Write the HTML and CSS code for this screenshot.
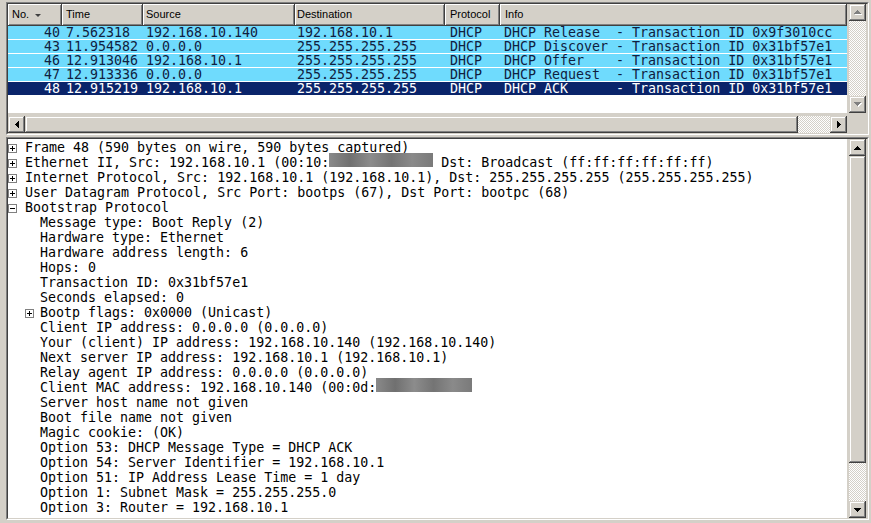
FILE: index.html
```html
<!doctype html>
<html>
<head>
<meta charset="utf-8">
<title>Ethereal - DHCP capture</title>
<link rel="stylesheet" href="styles.css">
</head>
<body>

<div class="win">

    <!-- packet list -->
    <div class="frame top"><div class="frame-in">

        <div class="plist">
            <div class="phead">
                <div class="hc c-no">No. <span class="sort"></span></div>
                <div class="hc c-time">Time</div>
                <div class="hc c-src">Source</div>
                <div class="hc c-dst">Destination</div>
                <div class="hc c-proto">Protocol</div>
                <div class="hc c-info">Info</div>
            </div>
            <div class="prow"><span class="c-no">40</span><span class="c-time">7.562318</span><span class="c-src">192.168.10.140</span><span class="c-dst">192.168.10.1</span><span class="c-proto">DHCP</span><span class="c-info">DHCP Release  - Transaction ID 0x9f3010cc</span></div>
            <div class="prow"><span class="c-no">43</span><span class="c-time">11.954582</span><span class="c-src">0.0.0.0</span><span class="c-dst">255.255.255.255</span><span class="c-proto">DHCP</span><span class="c-info">DHCP Discover - Transaction ID 0x31bf57e1</span></div>
            <div class="prow"><span class="c-no">46</span><span class="c-time">12.913046</span><span class="c-src">192.168.10.1</span><span class="c-dst">255.255.255.255</span><span class="c-proto">DHCP</span><span class="c-info">DHCP Offer    - Transaction ID 0x31bf57e1</span></div>
            <div class="prow"><span class="c-no">47</span><span class="c-time">12.913336</span><span class="c-src">0.0.0.0</span><span class="c-dst">255.255.255.255</span><span class="c-proto">DHCP</span><span class="c-info">DHCP Request  - Transaction ID 0x31bf57e1</span></div>
            <div class="prow sel"><span class="c-no">48</span><span class="c-time">12.915219</span><span class="c-src">192.168.10.1</span><span class="c-dst">255.255.255.255</span><span class="c-proto">DHCP</span><span class="c-info">DHCP ACK      - Transaction ID 0x31bf57e1</span></div>
        </div>

        <div class="vscroll">
            <div class="btn off"><svg width="8" height="5"><path d="M4 1h1v1h-1zM3 2h3v1h-3zM2 3h5v1h-5zM1 4h7v1h-7z" fill="#fff"/><path d="M3 0h1v1h-1zM2 1h3v1h-3zM1 2h5v1h-5zM0 3h7v1h-7z" fill="#808080"/></svg></div>
            <div class="track"></div>
            <div class="btn off"><svg width="8" height="5"><path d="M1 1h7v1h-7zM2 2h5v1h-5zM3 3h3v1h-3zM4 4h1v1h-1z" fill="#fff"/><path d="M0 0h7v1h-7zM1 1h5v1h-5zM2 2h3v1h-3zM3 3h1v1h-1z" fill="#808080"/></svg></div>
        </div>

        <div class="hscroll">
            <div class="btn"><svg width="4" height="7"><path d="M3 0h1v7h-1zM2 1h1v5h-1zM1 2h1v3h-1zM0 3h1v1h-1z" fill="#000"/></svg></div>
            <div class="thumb hthumb"></div>
            <div class="track"></div>
            <div class="btn"><svg width="4" height="7"><path d="M0 0h1v7h-1zM1 1h1v5h-1zM2 2h1v3h-1zM3 3h1v1h-1z" fill="#000"/></svg></div>
        </div>

    </div></div>

    <!-- packet details -->
    <div class="frame bottom"><div class="frame-in">

        <div class="tree">
            <div class="tn"><span class="tw"><svg class="box" width="9" height="9"><rect x=".5" y=".5" width="8" height="8" fill="#fff" stroke="#808080"/><rect x="2" y="4" width="5" height="1"/><rect x="4" y="2" width="1" height="5"/></svg></span><span>Frame 48 (590 bytes on wire, 590 bytes captured)</span></div>
            <div class="tn"><span class="tw"><svg class="box" width="9" height="9"><rect x=".5" y=".5" width="8" height="8" fill="#fff" stroke="#808080"/><rect x="2" y="4" width="5" height="1"/><rect x="4" y="2" width="1" height="5"/></svg></span><span>Ethernet II, Src: 192.168.10.1 (00:10:<span class="redact r1"></span> Dst: Broadcast (ff:ff:ff:ff:ff:ff)</span></div>
            <div class="tn"><span class="tw"><svg class="box" width="9" height="9"><rect x=".5" y=".5" width="8" height="8" fill="#fff" stroke="#808080"/><rect x="2" y="4" width="5" height="1"/><rect x="4" y="2" width="1" height="5"/></svg></span><span>Internet Protocol, Src: 192.168.10.1 (192.168.10.1), Dst: 255.255.255.255 (255.255.255.255)</span></div>
            <div class="tn"><span class="tw"><svg class="box" width="9" height="9"><rect x=".5" y=".5" width="8" height="8" fill="#fff" stroke="#808080"/><rect x="2" y="4" width="5" height="1"/><rect x="4" y="2" width="1" height="5"/></svg></span><span>User Datagram Protocol, Src Port: bootps (67), Dst Port: bootpc (68)</span></div>
            <div class="tn"><span class="tw"><svg class="box" width="9" height="9"><rect x=".5" y=".5" width="8" height="8" fill="#fff" stroke="#808080"/><rect x="2" y="4" width="5" height="1"/></svg></span><span>Bootstrap Protocol</span></div>
            <div class="tn l1"><span class="tw"></span><span>Message type: Boot Reply (2)</span></div>
            <div class="tn l1"><span class="tw"></span><span>Hardware type: Ethernet</span></div>
            <div class="tn l1"><span class="tw"></span><span>Hardware address length: 6</span></div>
            <div class="tn l1"><span class="tw"></span><span>Hops: 0</span></div>
            <div class="tn l1"><span class="tw"></span><span>Transaction ID: 0x31bf57e1</span></div>
            <div class="tn l1"><span class="tw"></span><span>Seconds elapsed: 0</span></div>
            <div class="tn l1"><span class="tw"><svg class="box" width="9" height="9"><rect x=".5" y=".5" width="8" height="8" fill="#fff" stroke="#808080"/><rect x="2" y="4" width="5" height="1"/><rect x="4" y="2" width="1" height="5"/></svg></span><span>Bootp flags: 0x0000 (Unicast)</span></div>
            <div class="tn l1"><span class="tw"></span><span>Client IP address: 0.0.0.0 (0.0.0.0)</span></div>
            <div class="tn l1"><span class="tw"></span><span>Your (client) IP address: 192.168.10.140 (192.168.10.140)</span></div>
            <div class="tn l1"><span class="tw"></span><span>Next server IP address: 192.168.10.1 (192.168.10.1)</span></div>
            <div class="tn l1"><span class="tw"></span><span>Relay agent IP address: 0.0.0.0 (0.0.0.0)</span></div>
            <div class="tn l1"><span class="tw"></span><span>Client MAC address: 192.168.10.140 (00:0d:<span class="redact r2"></span></span></div>
            <div class="tn l1"><span class="tw"></span><span>Server host name not given</span></div>
            <div class="tn l1"><span class="tw"></span><span>Boot file name not given</span></div>
            <div class="tn l1"><span class="tw"></span><span>Magic cookie: (OK)</span></div>
            <div class="tn l1"><span class="tw"></span><span>Option 53: DHCP Message Type = DHCP ACK</span></div>
            <div class="tn l1"><span class="tw"></span><span>Option 54: Server Identifier = 192.168.10.1</span></div>
            <div class="tn l1"><span class="tw"></span><span>Option 51: IP Address Lease Time = 1 day</span></div>
            <div class="tn l1"><span class="tw"></span><span>Option 1: Subnet Mask = 255.255.255.0</span></div>
            <div class="tn l1"><span class="tw"></span><span>Option 3: Router = 192.168.10.1</span></div>
        </div>

        <div class="vscroll">
            <div class="btn"><svg width="7" height="4"><path d="M3 0h1v1h-1zM2 1h3v1h-3zM1 2h5v1h-5zM0 3h7v1h-7z" fill="#000"/></svg></div>
            <div class="thumb vthumb"></div>
            <div class="track"></div>
            <div class="btn"><svg width="7" height="4"><path d="M0 0h7v1h-7zM1 1h5v1h-5zM2 2h3v1h-3zM3 3h1v1h-1z" fill="#000"/></svg></div>
        </div>

    </div></div>

</div>

</body>
</html>
```

FILE: styles.css
```css
body { margin: 0; background-color: #d4d0c8; font-family: "Liberation Sans", Arial, sans-serif; overflow: hidden; }
.win { padding: 2px 2px 0 6px; }

/* sunken frames */
.frame { border: 1px solid; border-color: #808080 #fff #fff #808080; }
.frame-in { border: 1px solid; border-color: #404040 #d4d0c8 #d4d0c8 #404040; display: grid; grid-template-columns: 839px 2px 17px 1px; }
.frame.top { margin-bottom: 2px; }
.frame.top .frame-in { grid-template-rows: 109px 3px 17px; }
.frame.bottom .frame-in { grid-template-rows: 379px; }

/* scrollbars */
.vscroll { grid-column: 3; grid-row: 1; display: flex; flex-direction: column; }
.hscroll { grid-column: 1; grid-row: 3; display: flex; }
.btn, .thumb { background-color: #d4d0c8; box-shadow: inset -1px -1px #404040, inset 1px 1px #d4d0c8, inset -2px -2px #808080, inset 2px 2px #fff; }
.btn { width: 17px; height: 17px; flex: none; display: flex; align-items: center; justify-content: center; }
.btn svg { display: block; }
.track { flex: 1; background: repeating-conic-gradient(#fff 0 25%, #d4d0c8 0 50%) 0 0 / 2px 2px; }
.hthumb { width: 773px; flex: none; }
.vthumb { height: 307px; flex: none; }

/* packet list */
.plist { grid-column: 1; grid-row: 1; background-color: #fff; overflow: hidden; }
.phead { display: flex; height: 22px; }
.hc { box-sizing: border-box; height: 22px; line-height: 21px; font-size: 11px; color: #000; padding-left: 5px; background-color: #d4d0c8; box-shadow: inset -1px -1px #404040, inset 1px 1px #fff, inset -2px -2px #808080; white-space: nowrap; }
.sort { display: inline-block; width: 0; height: 0; margin-left: 3px; vertical-align: 1px; border-left: 3px solid transparent; border-right: 3px solid transparent; border-top: 3px solid #404040; }

.prow { display: flex; height: 13px; border-bottom: 1px solid #fff; background-color: #6fdbfd; color: #102040; font: 13.3px/13px "DejaVu Sans Mono", monospace; white-space: pre; }
.prow.sel { background-color: #0a246a; color: #fff; }
.prow span { box-sizing: border-box; overflow: hidden; }

.c-no { width: 54px; flex: none; text-align: right; padding-right: 2px; }
.c-time { width: 81px; flex: none; padding-left: 4px; }
.c-src { width: 152px; flex: none; padding-left: 3px; }
.c-dst { width: 150px; flex: none; padding-left: 2px; }
.c-proto { width: 55px; flex: none; padding-left: 5px; }
.c-info { flex: 1; padding-left: 4px; }
.hc.c-no { text-align: left; padding-left: 4px; padding-right: 0; }
.hc.c-info { padding-left: 5px; }

/* packet details */
.tree { grid-column: 1; grid-row: 1; background-color: #fff; padding-top: 1px; overflow: hidden; color: #000; font: 13.3px/15px "DejaVu Sans Mono", monospace; }
.tn { display: flex; height: 15px; white-space: pre; }
.tw { width: 17px; flex: none; }
.box { display: block; margin-top: 4px; }
.box rect + rect { fill: #000; }
.l1 { padding-left: 15px; }
.l1 .box { margin-left: 2px; }

.redact { display: inline-block; vertical-align: top; margin-top: -2px; height: 14px; background: linear-gradient(90deg, #8a8a8a, #707070 20%, #8c8c8c 40%, #747474 60%, #8a8a8a 80%, #7a7a7a); }
.r1 { width: 104px; }
.r2 { width: 96px; }
```
